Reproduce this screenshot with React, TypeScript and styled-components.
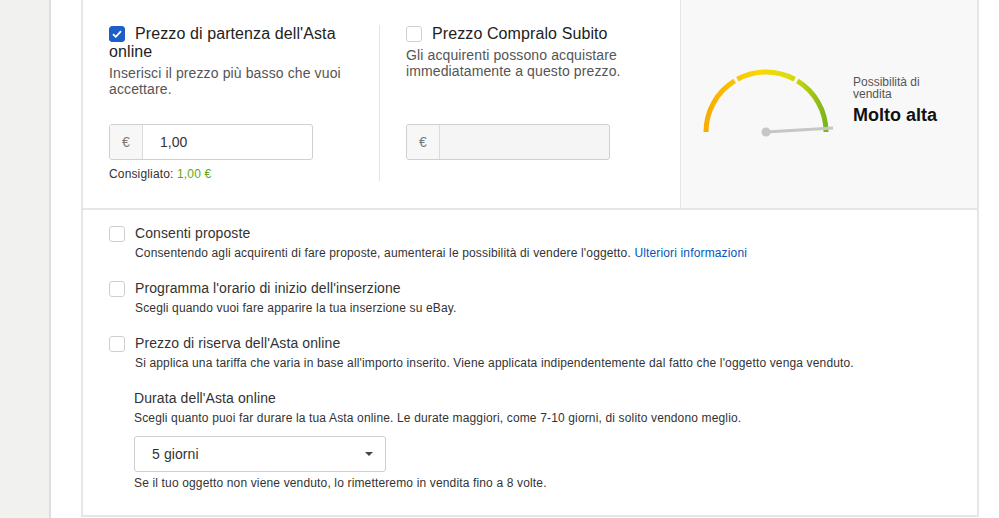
import React from 'react';
import styled, { createGlobalStyle } from 'styled-components';

const GlobalStyle = createGlobalStyle`
  * {
    margin: 0;
    padding: 0;
    box-sizing: border-box;
  }

  body {
    font-family: 'Liberation Sans', Arial, sans-serif;
    background: #fff;
    color: #333;
    overflow: hidden;
  }
`;

const Page = styled.div`
  display: flex;
  min-height: 100vh;
`;

const Sidebar = styled.aside`
  width: 51px;
  flex-shrink: 0;
  background: #f1f1ef;
  border-right: 2px solid #dedede;
`;

const Main = styled.main`
  flex: 1;
  padding-left: 30px;
`;

const Card = styled.section`
  width: 898px;
  border: 2px solid #e6e6e6;
  border-top: none;
  background: #fff;
`;

const TopSection = styled.div`
  display: flex;
  border-bottom: 2px solid #e6e6e6;
`;

const PriceColumns = styled.div`
  width: 597px;
  display: flex;
  padding: 25px 0 27px 26px;
`;

const PriceColumn = styled.div<{ $first?: boolean }>`
  width: ${p => (p.$first ? '271px' : '245px')};
  padding-right: ${p => (p.$first ? '26px' : '0')};
  padding-left: ${p => (p.$first ? '0' : '26px')};
  border-right: ${p => (p.$first ? '1px solid #e3e3e3' : 'none')};
`;

const PriceHead = styled.div`
  min-height: 99px;
`;

const PriceTitle = styled.label`
  display: block;
  font-size: 16px;
  line-height: 18px;
  letter-spacing: 0.1px;
  color: #222;
`;

const Box = styled.span<{ $checked?: boolean }>`
  display: inline-flex;
  align-items: center;
  justify-content: center;
  width: 16px;
  height: 16px;
  border-radius: 3px;
  vertical-align: top;
  margin-top: 1px;
  margin-right: 10px;
  background: ${p => (p.$checked ? '#1d5fc9' : '#fff')};
  border: 1px solid ${p => (p.$checked ? '#1d5fc9' : '#cfcfcf')};
  flex-shrink: 0;
`;

const PriceHint = styled.p`
  margin-top: 4px;
  font-size: 14px;
  line-height: 16px;
  letter-spacing: 0.12px;
  color: #555;
`;

const PriceInput = styled.div<{ $disabled?: boolean }>`
  display: flex;
  width: 204px;
  height: 36px;
  border: 1px solid #cfcfcf;
  border-radius: 3px;
  overflow: hidden;
  background: ${p => (p.$disabled ? '#f5f5f5' : '#fff')};
`;

const Currency = styled.span`
  width: 33px;
  display: flex;
  align-items: center;
  justify-content: center;
  background: #f7f7f7;
  border-right: 1px solid #dcdcdc;
  color: #777;
  font-size: 14px;
`;

const Amount = styled.span`
  flex: 1;
  display: flex;
  align-items: center;
  padding-left: 17px;
  font-size: 14px;
  color: #333;
`;

const Suggested = styled.p`
  margin-top: 7px;
  font-size: 12px;
  line-height: 14px;
  letter-spacing: 0.15px;
  color: #333;

  strong {
    font-weight: normal;
    color: #5ba71b;
  }
`;

const GaugePanel = styled.div`
  flex: 1;
  display: flex;
  align-items: center;
  padding: 0 0 6px 20px;
  background: #f8f8f8;
  border-left: 1px solid #e6e6e6;
`;

const GaugeText = styled.div`
  margin-left: 16px;
  width: 100px;
`;

const GaugeLabel = styled.p`
  font-size: 12px;
  line-height: 12px;
  color: #555;
`;

const GaugeValue = styled.p`
  margin-top: 4px;
  font-size: 18px;
  line-height: 22px;
  font-weight: bold;
  color: #111;
`;

const Options = styled.div`
  padding: 15px 0 24px 26px;
`;

const OptionRow = styled.div`
  display: flex;
  padding-bottom: 19px;
`;

const OptionBody = styled.div<{ $indent?: boolean }>`
  padding-left: ${p => (p.$indent ? '25px' : '0')};
`;

const OptionTitle = styled.p`
  font-size: 14px;
  line-height: 16px;
  letter-spacing: 0.1px;
  color: #333;
`;

const OptionHint = styled.p`
  margin-top: 4px;
  font-size: 12px;
  line-height: 16px;
  letter-spacing: 0.15px;
  color: #333;

  a {
    color: #0654ba;
    text-decoration: none;
  }
`;

const Select = styled.div`
  margin-top: 10px;
  width: 252px;
  height: 36px;
  display: flex;
  align-items: center;
  justify-content: space-between;
  padding: 0 12px 0 17px;
  border: 1px solid #cfcfcf;
  border-radius: 3px;
  font-size: 14px;
  letter-spacing: 0.1px;
  color: #333;
`;

const Caret = styled.span`
  width: 0;
  height: 0;
  border-left: 4px solid transparent;
  border-right: 4px solid transparent;
  border-top: 4px solid #444;
`;

const SelectNote = styled(OptionHint)`
  margin-top: 3px;
`;

const Check = () => (
  <svg width="10" height="8" viewBox="0 0 10 8">
    <path d="M1 4.2 L3.8 6.8 L9 1.2" fill="none" stroke="#fff" strokeWidth="1.8" />
  </svg>
);

const Gauge = () => (
  <svg width="136" height="72" viewBox="0 0 136 72">
    <defs>
      <linearGradient id="g" gradientUnits="userSpaceOnUse" x1="5" y1="0" x2="125" y2="0">
        <stop offset="0" stopColor="#f8ad00" />
        <stop offset="0.45" stopColor="#f8d800" />
        <stop offset="0.7" stopColor="#dcdc0a" />
        <stop offset="1" stopColor="#7ab51d" />
      </linearGradient>
    </defs>
    <g fill="none" stroke="url(#g)" strokeWidth="5">
      <path d="M5 67 A60 60 0 0 1 33.65 15.84" />
      <path d="M36.37 14.27 A60 60 0 0 1 93.63 14.27" />
      <path d="M96.35 15.84 A60 60 0 0 1 125 67" />
    </g>
    <line x1="65" y1="67" x2="132" y2="63" stroke="#c6c6c6" strokeWidth="3" />
    <circle cx="65" cy="67" r="4.5" fill="#c6c6c6" />
  </svg>
);

const options = [
  {
    title: 'Consenti proposte',
    hint: "Consentendo agli acquirenti di fare proposte, aumenterai le possibilità di vendere l'oggetto.",
    link: 'Ulteriori informazioni',
  },
  {
    title: "Programma l'orario di inizio dell'inserzione",
    hint: 'Scegli quando vuoi fare apparire la tua inserzione su eBay.',
  },
  {
    title: "Prezzo di riserva dell'Asta online",
    hint: "Si applica una tariffa che varia in base all'importo inserito. Viene applicata indipendentemente dal fatto che l'oggetto venga venduto.",
  },
];

export default function App() {
  return (
    <>
      <GlobalStyle />
      <Page>
        <Sidebar />
        <Main>
          <Card>
            <TopSection>
              <PriceColumns>
                <PriceColumn $first>
                  <PriceHead>
                    <PriceTitle>
                      <Box $checked><Check /></Box>
                      Prezzo di partenza dell'Asta online
                    </PriceTitle>
                    <PriceHint>Inserisci il prezzo più basso che vuoi accettare.</PriceHint>
                  </PriceHead>
                  <PriceInput>
                    <Currency>€</Currency>
                    <Amount>1,00</Amount>
                  </PriceInput>
                  <Suggested>
                    Consigliato: <strong>1,00 €</strong>
                  </Suggested>
                </PriceColumn>
                <PriceColumn>
                  <PriceHead>
                    <PriceTitle>
                      <Box />
                      Prezzo Compralo Subito
                    </PriceTitle>
                    <PriceHint>Gli acquirenti possono acquistare immediatamente a questo prezzo.</PriceHint>
                  </PriceHead>
                  <PriceInput $disabled>
                    <Currency>€</Currency>
                    <Amount />
                  </PriceInput>
                </PriceColumn>
              </PriceColumns>
              <GaugePanel>
                <Gauge />
                <GaugeText>
                  <GaugeLabel>Possibilità di vendita</GaugeLabel>
                  <GaugeValue>Molto alta</GaugeValue>
                </GaugeText>
              </GaugePanel>
            </TopSection>
            <Options>
              {options.map(o => (
                <OptionRow key={o.title}>
                  <Box />
                  <OptionBody>
                    <OptionTitle>{o.title}</OptionTitle>
                    <OptionHint>
                      {o.hint}
                      {o.link && <> <a href="#">{o.link}</a></>}
                    </OptionHint>
                  </OptionBody>
                </OptionRow>
              ))}
              <OptionBody $indent>
                <OptionTitle>Durata dell'Asta online</OptionTitle>
                <OptionHint>
                  Scegli quanto puoi far durare la tua Asta online. Le durate maggiori, come 7-10 giorni, di solito vendono meglio.
                </OptionHint>
                <Select>
                  5 giorni
                  <Caret />
                </Select>
                <SelectNote>Se il tuo oggetto non viene venduto, lo rimetteremo in vendita fino a 8 volte.</SelectNote>
              </OptionBody>
            </Options>
          </Card>
        </Main>
      </Page>
    </>
  );
}
